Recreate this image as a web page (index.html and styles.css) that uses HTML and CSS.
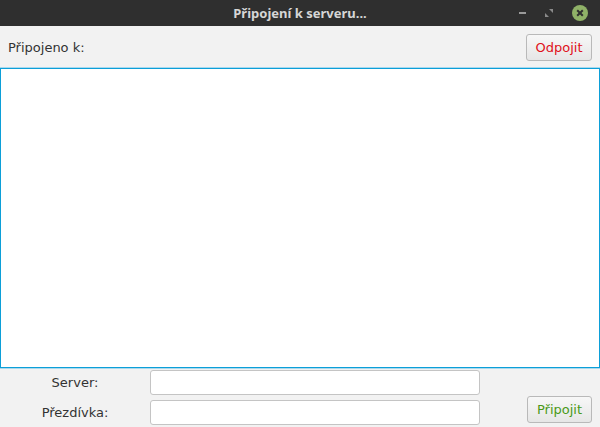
FILE: index.html
```html
<html>
  <head>
    <title>Připojení k serveru...</title>
    <link rel="stylesheet" href="styles.css">
  </head>
  <body>
    <div class="titlebar">
      <span class="title">Připojení k serveru...</span>
      <div class="controls">
        <span class="ctl min"></span>
        <svg class="ctl max" width="8" height="8" viewBox="0 0 8 8">
          <path d="M4 0H8V4Z M0 4V8H4Z" fill="#8a8a8a"/>
        </svg>
        <svg class="ctl close" width="16" height="16" viewBox="0 0 16 16">
          <circle cx="8" cy="8" r="8" fill="#8fb167"/>
          <path d="M5.2 5.2L10.8 10.8M10.8 5.2L5.2 10.8" stroke="#2f2f2f" stroke-width="2"/>
        </svg>
      </div>
    </div>

    <div class="top-row">
      <span class="label">Připojeno k:</span>
      <button class="btn red">Odpojit</button>
    </div>

    <div class="log"></div>

    <div class="form">
      <div class="fields">
        <label class="field-label">Server:</label>
        <input class="field" type="text"/>
        <label class="field-label">Přezdívka:</label>
        <input class="field" type="text"/>
      </div>
      <button class="btn green">Připojit</button>
    </div>
  </body>
</html>
```

FILE: styles.css
```css
body {
  margin: 0;
  width: 600px;
  height: 427px;
  overflow: hidden;
  background: #f2f2f2;
  font-family: 'DejaVu Sans', sans-serif;
  font-size: 13px;
  color: #333;
}
.titlebar {
  height: 26px;
  background: #2f2f2f;
  display: flex;
  align-items: center;
  justify-content: center;
  position: relative;
}
.title {
  font-family: 'Noto Sans', sans-serif;
  font-weight: bold;
  font-size: 13px;
  color: #d6d6d6;
}
.controls {
  position: absolute;
  right: 12px;
  top: 5px;
  display: flex;
  align-items: center;
  gap: 19px;
}
.ctl.min {
  width: 7px;
  height: 2px;
  background: #9a9a9a;
}
.top-row {
  height: 42px;
  display: flex;
  align-items: center;
  justify-content: space-between;
  padding: 0 8px;
}
.top-row .label {
  margin-top: 1px;
}
.btn {
  font-family: 'DejaVu Sans', sans-serif;
  font-size: 13px;
  height: 27px;
  padding: 0;
  border: 1px solid #b9b9b9;
  border-radius: 3px;
  background: linear-gradient(#f7f7f7, #e6e6e6);
}
.btn.red {
  color: #e0101a;
  width: 66px;
  margin-top: 1px;
}
.btn.green {
  color: #4a9a18;
  width: 65px;
  margin: 26px 8px 0 0;
}
.log {
  height: 298px;
  background: #fff;
  border: 1px solid #0c9fd8;
  box-shadow: 0 -1px 0 #a9d9ee, 0 1px 0 #a9d9ee;
}
.form {
  display: flex;
  justify-content: space-between;
  padding-top: 2px;
}
.fields {
  display: grid;
  grid-template-columns: 150px 330px;
  row-gap: 5px;
  align-items: center;
}
.field-label {
  text-align: center;
}
.field {
  height: 25px;
  border: 1px solid #c4c4c4;
  border-radius: 3px;
  background: #fff;
  box-sizing: border-box;
}
```
